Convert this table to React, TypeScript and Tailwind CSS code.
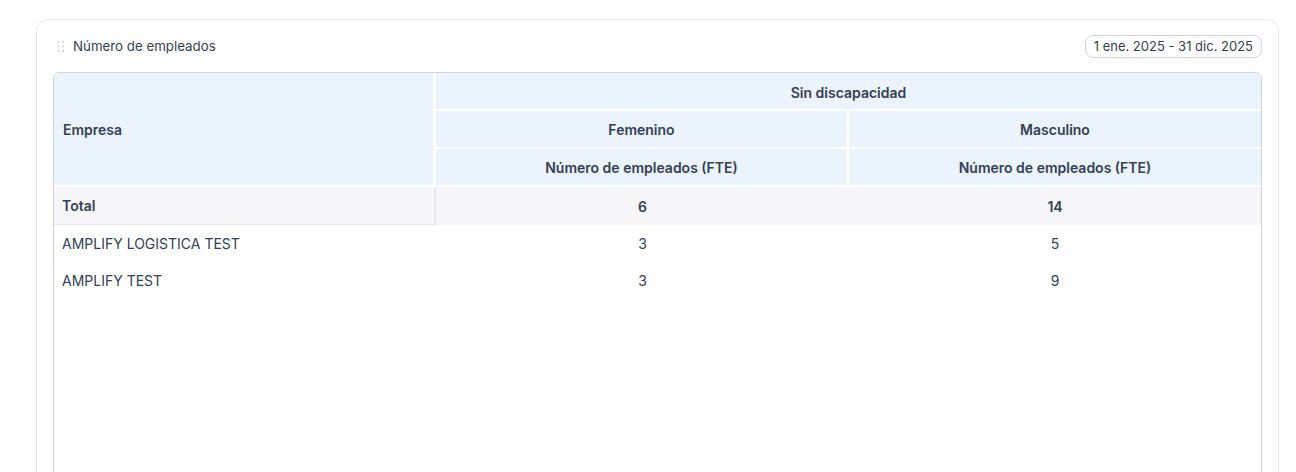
const rows = [
  { empresa: "AMPLIFY LOGISTICA TEST", fem: 3, masc: 5 },
  { empresa: "AMPLIFY TEST", fem: 3, masc: 9 },
];

function DragHandle() {
  return (
    <svg width="8" height="11" viewBox="0 0 8 11" className="shrink-0 text-[#d1d5db]">
      {[1, 5.5, 10].map((y) =>
        [1.5, 6].map((x) => <circle key={`${x}-${y}`} cx={x} cy={y} r="1.1" fill="currentColor" />)
      )}
    </svg>
  );
}

export default function App() {
  return (
    <div className="min-h-screen bg-white pl-[36px] pr-[17px] pt-[19px] font-['Inter','Liberation_Sans',sans-serif] text-[#374151]">
      <div className="rounded-xl border border-[#e5e7eb] bg-white px-4 pt-[15px] pb-4">
        <div className="flex h-[23px] items-center justify-between">
          <div className="flex items-center gap-[8px] pl-[4px]">
            <DragHandle />
            <span className="text-[13.3px] text-[#374151]">Número de empleados</span>
          </div>
          <span className="flex h-[23px] items-center rounded-lg border border-[#d1d5db] px-2 text-[13px] text-[#374151]">
            1 ene. 2025 - 31 dic. 2025
          </span>
        </div>

        <div className="mt-[14px] h-[460px] overflow-hidden rounded-md border border-[#d1d5db] bg-white">
          <table className="w-full table-fixed border-separate border-spacing-0 text-sm text-[#344054]">
            <colgroup>
              <col className="w-[382px]" />
              <col className="w-[413px]" />
              <col />
            </colgroup>
            <thead>
              <tr className="h-[38px]">
                <th
                  rowSpan={3}
                  className="border-r-[3px] border-b-2 border-white bg-[#ebf3fd] pt-[2px] pl-[9px] text-left font-semibold"
                >
                  Empresa
                </th>
                <th colSpan={2} className="border-b-2 border-white bg-[#ebf3fd] pt-[3px] font-semibold">
                  Sin discapacidad
                </th>
              </tr>
              <tr className="h-[38px]">
                <th className="border-r-2 border-b-2 border-white bg-[#ebf3fd] pt-[2px] font-semibold">Femenino</th>
                <th className="border-b-2 border-white bg-[#ebf3fd] pt-[2px] font-semibold">Masculino</th>
              </tr>
              <tr className="h-[38px]">
                <th className="border-r-2 border-b-2 border-white bg-[#ebf3fd] pt-[2px] font-semibold">Número de empleados (FTE)</th>
                <th className="border-b-2 border-white bg-[#ebf3fd] pt-[2px] font-semibold">Número de empleados (FTE)</th>
              </tr>
            </thead>
            <tbody>
              <tr className="h-[38px] bg-[#f6f6f8] font-semibold">
                <td className="border-r-2 border-b border-[#e5e7eb] pt-[1px] pl-[8px]">Total</td>
                <td className="pt-[1px] text-center">6</td>
                <td className="pt-[1px] text-center">14</td>
              </tr>
              {rows.map((r) => (
                <tr key={r.empresa} className="h-[37px]">
                  <td className="pl-[8px]">{r.empresa}</td>
                  <td className="text-center">{r.fem}</td>
                  <td className="text-center">{r.masc}</td>
                </tr>
              ))}
            </tbody>
          </table>
        </div>
      </div>
    </div>
  );
}
